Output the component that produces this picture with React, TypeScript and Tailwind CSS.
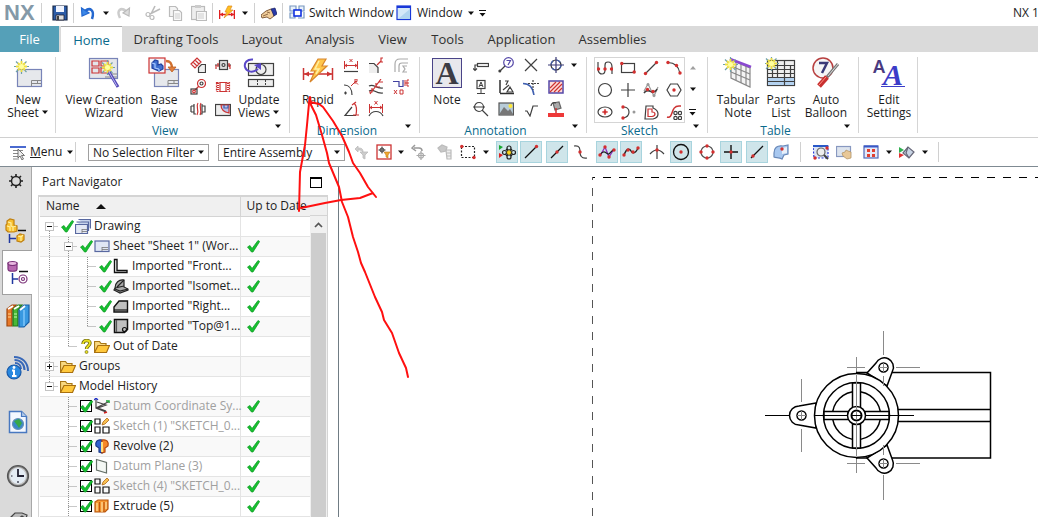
import type { ReactNode } from "react";

const D = "#404040";
const R = "#cc3333";

type SvgProps = { w?: number; h?: number; children: ReactNode };

function Ico({ w = 16, h = 16, children }: SvgProps) {
  return (
    <svg width={w} height={h} viewBox={`0 0 ${w} ${h}`} fill="none" stroke={D} strokeWidth="1.2" className="block shrink-0" aria-hidden="true">
      {children}
    </svg>
  );
}

const Arrow = ({ light = false }: { light?: boolean }) => (
  <svg width="8" height="5" viewBox="0 0 8 5" className="block shrink-0" aria-hidden="true">
    <path d="M1 .5h6L4 4z" fill={light ? "#a0a0a0" : "#111"} />
  </svg>
);

const OverflowArrow = () => (
  <svg width="8" height="7" viewBox="0 0 8 7" className="block shrink-0" aria-hidden="true">
    <path d="M0 0h7v1H0zM.5 3h6L3.5 6.500z" fill="#111" />
  </svg>
);

function Dots({ at }: { at: [number, number][] }) {
  return (
    <g fill="#d32f2f" stroke="none">
      {at.map(([x, y]) => (
        <circle key={`${x}-${y}`} cx={x} cy={y} r="1.700" />
      ))}
    </g>
  );
}

function Star() {
  return (
    <g>
      <path d="M7.500 0v15M0 7.500h15M2 2.500l10.500 10.500M12.500 2.500L2 13" stroke="#6fa0a8" strokeWidth="1.200" />
      <path d="M7.500 2v11M2 7.500h11M4 4l7 7M11 4l-7 7" stroke="#f0e040" strokeWidth="1.800" />
      <circle cx="7.500" cy="7.500" r="2.500" fill="#ffffa0" stroke="none" />
    </g>
  );
}

const big = {
  newSheet: (
    <Ico w={32} h={32}>
      <rect x="5.500" y="12.500" width="24" height="17" fill="#e6e8ec" stroke="#7884b8" />
      <path d="M19.500 23.500h9.500M19.500 26.500h9.500M19.500 23.500v6M25.500 23.500v3" stroke="#888" strokeWidth="1" />
      <g transform="translate(2 2)"><Star /></g>
    </Ico>
  ),
  wizard: (
    <Ico w={32} h={32}>
      <rect x="1.500" y="1.500" width="28" height="20" fill="#e4e6ea" stroke="#7884b8" />
      <path d="M4 4h7v5H4zM13 4h7v5h-7zM4 11h7v5H4zM13 11h7v5h-7z" stroke={R} />
      <path d="M19 17h10M17 20h12" stroke="#888" />
      <g transform="translate(12 3)"><Star /></g>
      <path d="M21 15l9 15" stroke="#5548b8" strokeWidth="3" />
      <path d="M21 15l8 14" stroke="#b8b8f0" strokeWidth="1" />
    </Ico>
  ),
  baseView: (
    <Ico w={32} h={32}>
      <rect x="6.500" y="12.500" width="24" height="17" fill="#e6e8ec" stroke="#7884b8" />
      <path d="M20 23.500h10M20 26.500h10M20 23.500v6M26 23.500v3" stroke="#888" strokeWidth="1" />
      <rect x="1" y="1" width="16" height="15" fill="#f4f4f8" stroke={R} />
      <path d="M4 6l3-3 3 1v4l3-1 2 2v3l-4 2-7-3z" fill="#4070d0" stroke="#2040a0" />
      <path d="M4 6l3 1v4l4 1M11 12v2" stroke="#a8c8ff" />
      <path d="M18 4c5 0 6 3 6 8" stroke="#d07030" strokeWidth="2.500" />
      <path d="M20 10h8l-4 5z" fill="#e08040" stroke="#c06020" strokeWidth=".8" />
    </Ico>
  ),
  update: (
    <Ico w={32} h={32}>
      <rect x="5.500" y="6.500" width="25" height="12" fill="#eee" stroke={D} />
      <circle cx="18" cy="12.500" r="5" />
      <rect x="5.500" y="22.500" width="25" height="7" fill="#eee" stroke={D} />
      <path d="M14.500 23v6M22.500 23v6" strokeDasharray="2 1" strokeWidth="1" />
      <path d="M10 2.500C4 2 1 6 2 10s7 7 13 2" stroke="#5a48c8" strokeWidth="2" />
      <path d="M11 8l7-2v7z" fill="#5a48c8" stroke="none" />
    </Ico>
  ),
  rapid: (
    <Ico w={32} h={32}>
      <path d="M1.500 11v12M30.500 11v12M2 17h28" stroke={R} strokeWidth="1.500" />
      <path d="M2 17l5-2.500v5zM30 17l-5-2.500v5z" fill={R} stroke="none" />
      <path d="M16 2h8l-4 7h5L8 25l5-11H9z" fill="#ffc64a" stroke="#d8862c" />
      <path d="M17 4l-4 8h4l-3 5" stroke="#fff0a0" strokeWidth="1.500" />
    </Ico>
  ),
  note: (
    <span className="mt-px flex size-[30px] items-center justify-center border border-[#4a4488] bg-[#e8e8ec] font-['Liberation_Serif',serif] text-[32px] leading-[28px] font-bold text-[#3c3c44]">A</span>
  ),
  tabular: (
    <Ico w={32} h={32}>
      <path d="M9 3l19 8v19L9 21z" fill="#f4f4f4" stroke="#888" />
      <path d="M9 9l19 8M9 15l19 8M14 5v18M19 7v19M24 9v19" stroke="#888" />
      <path d="M8 2l21 8" stroke="#8a48d0" strokeWidth="2.500" />
      <g transform="translate(1 0)"><Star /></g>
    </Ico>
  ),
  parts: (
    <Ico w={32} h={32}>
      <rect x="2.500" y="3.500" width="27" height="25" fill="#f0f0f0" stroke={D} />
      <rect x="3" y="20" width="26" height="8" fill="#b4d2f0" stroke="none" />
      <path d="M2 8.500h27M2 12.500h27M2 16.500h27M2 20.500h27M2 24.500h27M12.500 4v16M19.500 4v24M25.500 8v12M7.500 12v8" />
      <g transform="translate(-1 -1)"><Star /></g>
    </Ico>
  ),
  balloon: (
    <Ico w={32} h={32}>
      <circle cx="13" cy="11" r="10" fill="#f6f6f6" stroke="#b84040" strokeWidth="1.500" />
      <path d="M9 6h8l-5 10" stroke="#3a3a78" strokeWidth="2.500" />
      <path d="M28 7L17 20" stroke="#777" strokeWidth="3" />
      <path d="M28 7L18 19" stroke="#ddd" strokeWidth="1" />
      <path d="M17 20l-8 9" stroke="#c83030" strokeWidth="5" />
      <path d="M16 20l-7 8" stroke="#ff9080" strokeWidth="1" />
    </Ico>
  ),
  edit: (
    <span className="flex h-8 items-start justify-center" aria-hidden="true">
      <span className="font-['Noto_Sans',sans-serif] text-[18px] leading-[18px] font-semibold text-[#4a3a80]">A</span>
      <span className="-ml-1 mt-[7px] flex h-[23px] items-start border-b border-[#3c3cc8] px-0.5 font-['Liberation_Serif',serif] text-[30px] leading-[21px] font-bold italic text-[#3c3cc8]">A</span>
    </span>
  ),
};

const viewIcons: [string, ReactNode][] = [
  ["Projected View", <Ico><path d="M1 7l6-6 4 4-6 6zM3 5l4 4M5 3l4 4" stroke={R} /><path d="M8.500 15.500v-5l3-3h4v8z" fill="#eee" /></Ico>],
  ["Section View", <Ico><rect x="4.500" y="3.500" width="8" height="9" fill="#ddd" /><circle cx="8.500" cy="8" r="1.500" /><path d="M0 8h4M12 8h4" /><path d="M1 8v4M15 8v4M3 6v4M14 6v4" stroke={R} /></Ico>],
  ["Detail View", <Ico><circle cx="11.500" cy="4.500" r="4" fill="#fff" stroke={R} /><circle cx="11.500" cy="4.500" r="1.500" /><path d="M9 7l-4 4" stroke={R} /><rect x="1" y="10" width="6" height="5" /><circle cx="4" cy="12.500" r="1.300" stroke={R} /></Ico>],
  ["Half Section", <Ico><rect x="1.500" y="3.500" width="13" height="9" stroke={R} strokeDasharray="2 1" /><path d="M5 3.500h6v9H5z" fill="#fff" stroke={R} /><path d="M3 4v8M13 4v8" stroke={R} strokeDasharray="1 1" strokeWidth="2" /></Ico>],
  ["Break View", <Ico><path d="M1 5v6M1 5h3v6H1M4 3v10h2M15 5v6h-3V5zM12 3v10h-2" /><path d="M8 2c-3 4 2 7-1 12M11 2c-3 4 2 7-1 12" stroke={R} /></Ico>],
  ["Break-out Section", <Ico><rect x=".5" y="3.500" width="15" height="11" fill="#eee" /><path d="M6 4c0 5 3 7 8 8V4z" fill="#b8c0e8" stroke={R} /><path d="M9 4v3h4V4" stroke="#4060b0" /></Ico>],
];

const dimIcons: [string, ReactNode][] = [
  ["Linear", <Ico><path d="M1.500 4v8M14.500 4v8M2 8.500h12M6.500 2l3 3M9.500 2l-3 3M4 7L2 8.500 4 10M12 7l2 1.500L12 10" stroke={R} strokeWidth="1" /><path d="M1 14.500h14" /></Ico>],
  ["Chamfer", <Ico><path d="M1 7h5l4 4v5H1z" fill="#eee" stroke="none" /><path d="M1 6.500h5l4 4V16" /><path d="M9 8l4-4M15 1h-2v4h2" stroke={R} /></Ico>],
  ["Thickness Arc", <Ico><path d="M2 15V7q0-5 5-5h8M6 15V9q0-3 3-3h6" stroke="#aaa" /><path d="M14 9h-4l2 3-2 3h4" stroke="#aaa" /></Ico>],
  ["Radial", <Ico><path d="M1 6c5 0 8 4 8 10M1 14h3M2.500 12.500v3" /><path d="M8 7l4-4M12 5V0h2v2.500h-2l3 3" stroke={R} strokeWidth="1" /></Ico>],
  ["Thickness", <Ico><path d="M1 7c5-3 6 3 14 2M1 12c5-3 6 3 14 2" /><path d="M13 0L2 15M11 3h4M4 9v4H1M8 4v4h4" stroke={R} /></Ico>],
  ["Ordinate", <Ico><path d="M0 2.500h6v5h4V1" stroke="#4040a0" /><path d="M12 1v6M14 1v6h2M14 1h2M1 11l3 4M4 11l-3 4M7 11v4h3v-4zM12 4h4" stroke={R} strokeWidth="1" /></Ico>],
  ["Angular", <Ico><path d="M13 14.500H2L9 6" /><path d="M11 2c3 3 3 7 2 12M9 4l4-3M10 14h6" stroke={R} /></Ico>],
  ["Arc Length", <Ico><path d="M1 15c3-6 11-6 14 0" /><path d="M1.500 3v9M14.500 3v9M2 6.500h12M6.500 0l3 3.500M9.500 0l-3 3.500M4 5L2 6.500 4 8M12 5l2 1.500L12 8" stroke={R} strokeWidth="1" /></Ico>],
];

const annoIcons: [string, ReactNode][] = [
  ["Feature Control Frame", <Ico><rect x="4.500" y="6.500" width="11" height="3" fill="#fff" /><path d="M2 13V8h3M0 11.500l2 2 2-2" /></Ico>],
  ["Balloon", <Ico><circle cx="10.500" cy="5.500" r="4.800" stroke="#5548a8" /><path d="M8.500 3.500h4L10 8" stroke="#5548a8" /><path d="M7 9l-5 5" /><circle cx="1.800" cy="14" r="1.500" fill={D} stroke="none" /></Ico>],
  ["Target Point", <Ico><path d="M2 2l12 12M14 2L2 14" /></Ico>],
  ["Center Mark", <Ico><circle cx="8" cy="8" r="5" stroke="#303030" /><circle cx="8" cy="8" r="5" stroke="#4060b0" strokeDasharray="4 4" /><path d="M8 0v16M0 8h16" stroke="#3a3a78" /></Ico>],
  ["Datum Feature", <Ico><rect x="4" y="1.500" width="8" height="8" fill="#fff" /><path d="M8 10v4M4 14.500h8M6 8l2-5 2 5M7 6.500h2" strokeWidth="1" /></Ico>],
  ["Datum Target", <Ico><path d="M2 1v13M2 14.500h14" stroke="#303030" strokeWidth="1.500" /><path d="M5 11l6-5M7 2h3l-2 4M12 8l3 5H9z" /></Ico>],
  ["Intersection", <Ico><path d="M0 4.500c6 0 10 4 11 12" stroke="#4060b0" strokeWidth="1.500" /><path d="M10 1v10M5 4.500h11" strokeDasharray="2 1" /></Ico>],
  ["Crosshatch", <Ico><rect x="1" y="2" width="14" height="12" fill="#ffdcd8" stroke="#5548a8" strokeWidth="1.500" /><path d="M2 9l6-6M2 13L12 3M6 13l8-8M10 13l4-4" stroke={R} /></Ico>],
  ["Identification Symbol", <Ico><circle cx="6" cy="6" r="4.500" /><path d="M0 6h12M9 9l6 6" /></Ico>],
  ["Image", <Ico><rect x="1" y="2" width="14.500" height="12" fill="#b8ccd8" stroke="#555" /><path d="M2 12l4-6 4 4 2-2 3 5v1H2z" fill="#777" stroke="none" /><circle cx="12.500" cy="5" r="2" fill="#ffe838" stroke="none" /></Ico>],
  ["Surface Finish", <Ico><path d="M2 10h2l3 5L10 5h5" /></Ico>],
  ["Area Fill", <Ico><path d="M5 2l6-1 2 6-6 2z" fill="#aaa" stroke="#666" /><path d="M3 5c0-3 3-4 5-3" /><path d="M8 7v6" stroke={R} strokeWidth="1.500" /><path d="M0 12h16v4H0z" fill="#ee3838" stroke="none" /></Ico>],
];

const sketchIcons: [string, ReactNode][] = [
  ["Profile", <Ico><path d="M1 2v8q1 4 4 4t3-4V5q0-3 3-3 4 0 4 5v7" /><Dots at={[[1.500, 9], [8, 9], [14.500, 9]]} /></Ico>],
  ["Rectangle", <Ico><rect x="1.500" y="3.500" width="13" height="9" /><Dots at={[[1.800, 3.500], [14.200, 12]]} /></Ico>],
  ["Line", <Ico><path d="M2 14L14 2" /><Dots at={[[2.500, 13.500], [13.500, 2.500]]} /></Ico>],
  ["Arc", <Ico><path d="M2 2.500q10 0 12 11" /><Dots at={[[2, 2.500], [10.500, 5.500], [14, 13]]} /></Ico>],
  ["Circle", <Ico><circle cx="8" cy="8" r="6.500" /></Ico>],
  ["Point", <Ico><path d="M8 1v14M1 8h14" /></Ico>],
  ["Studio Spline", <Ico><path d="M1 9l4-7 6 12 4-9" stroke="#999" /><path d="M1 11c3-5 7-1 8-1s4 0 5-3" strokeWidth="1.500" /><circle cx="5" cy="2.500" r="1.500" fill="#999" stroke="none" /><circle cx="11" cy="13.500" r="1.500" fill="#999" stroke="none" /><Dots at={[[4.500, 7.500], [10, 9.500]]} /></Ico>],
  ["Polygon", <Ico><path d="M4.500 2h7L15 8l-3.500 6h-7L1 8z" /><Dots at={[[8, 8]]} /></Ico>],
  ["Ellipse", <Ico><ellipse cx="8" cy="8" rx="7" ry="5" /><path d="M5 8h6M8 5v6" stroke={R} /><Dots at={[[8, 8]]} /></Ico>],
  ["Conic", <Ico><path d="M3 3q6 0 6 5t-6 6" /><Dots at={[[3, 3], [3, 14]]} /><circle cx="14" cy="8" r="1.500" fill="#999" stroke="none" /></Ico>],
  ["Offset Curve", <Ico><path d="M3 2h7v2q5 2 5 6t-5 5H2z" /><path d="M5 5h4v3q3 0 3 2t-3 2.500H5z" stroke={R} /></Ico>],
  ["Pattern Curve", <Ico><path d="M1 13c7 2 3-11 12-11h2" stroke={R} strokeWidth="1.500" /><circle cx="9.500" cy="9" r="1.700" /><circle cx="14" cy="9" r="1.700" /><circle cx="9.500" cy="14" r="1.700" /><circle cx="14" cy="14" r="1.700" /></Ico>],
];

function BigButton({ icon, lines, width, drop = false }: { icon: ReactNode; lines: string[]; width: string; drop?: boolean }) {
  return (
    <button type="button" className={`${width} flex shrink-0 flex-col items-center whitespace-nowrap`}>
      <span className="flex h-8 items-start justify-center">{icon}</span>
      <span className="mt-1 flex flex-col items-center text-xs leading-[13px]">
        {lines.map((l, i) => (
          <span key={l} className="flex items-center gap-0.5">
            {l}
            {drop && i === lines.length - 1 && <Arrow />}
          </span>
        ))}
      </span>
    </button>
  );
}

function IconGrid({ icons, cols }: { icons: [string, ReactNode][]; cols: string }) {
  return (
    <div className={`grid ${cols} content-start gap-y-1.5`}>
      {icons.map(([name, icon]) => (
        <button key={name} type="button" title={name} aria-label={name}>{icon}</button>
      ))}
    </div>
  );
}

function Group({ width, label, children }: { width: string; label?: string; children: ReactNode }) {
  return (
    <section className={`${width} flex h-20 shrink-0`}>
      <div className="flex min-w-0 flex-1 flex-col">
        <div className="flex items-start">{children}</div>
        {label && (
          <div className="mt-auto flex text-xs leading-[13px] text-[#0a6a8c]">
            <span className="flex-1 text-center">{label}</span>
            <button type="button" aria-label={`${label} options`} className="flex w-[15px] items-start"><Arrow /></button>
          </div>
        )}
      </div>
      <div className="h-[76px] w-px bg-[#d5d5d5]" />
    </section>
  );
}

const Sep = () => <div className="h-5 w-px shrink-0 bg-[#d0d0d0]" />;

function QuickBar() {
  return (
    <header className="flex h-[26px] shrink-0 items-center text-xs whitespace-nowrap">
      <div className="w-[41px] shrink-0 pl-1 font-['Liberation_Sans',sans-serif] text-[22px] leading-[26px] font-bold text-[#8499a8]">NX</div>
      <Sep />
      <button type="button" aria-label="Save" className="ml-2.5">
        <Ico><path d="M1 1h14v14H1z" fill="#2c5ca8" stroke="#182848" /><path d="M4 1h8v6H4z" fill="#f0f4ff" stroke="none" /><path d="M4 10h8v5H4z" fill="#e0e0e0" stroke="#223" strokeWidth=".8" /><path d="M6 11v4" strokeWidth="2" /></Ico>
      </button>
      <div className="ml-[5px]"><Sep /></div>
      <button type="button" aria-label="Undo" className="ml-1.5">
        <Ico><path d="M5 6c5-4 10-1 7 8" stroke="#2468d0" strokeWidth="2.500" /><path d="M1.500 3l.5 8 7-3z" fill="#3c88e8" stroke="#2468d0" /></Ico>
      </button>
      <button type="button" aria-label="Undo list" className="ml-1.5"><Arrow /></button>
      <button type="button" aria-label="Redo" className="ml-1.5">
        <Ico><path d="M10 6C5 2 0 5 4 13" stroke="#ccc" strokeWidth="2.500" /><path d="M13.500 3l-.5 8-6-3z" fill="#ddd" stroke="#bbb" /></Ico>
      </button>
      <button type="button" aria-label="Cut" className="ml-[13px]">
        <Ico><path d="M10 1L6 9M15 4L5 9" stroke="#bbb" strokeWidth="1.600" /><circle cx="3" cy="9.500" r="2" stroke="#bbb" /><circle cx="7" cy="12.500" r="2" stroke="#bbb" /></Ico>
      </button>
      <button type="button" aria-label="Copy" className="ml-[7px]">
        <Ico><path d="M1.500 1.500h6l2 2v8h-8z" fill="#f4f4f4" stroke="#bbb" /><path d="M5.500 5.500h6l2 2v8h-8z" fill="#fafafa" stroke="#bbb" /><path d="M7 9h5M7 11h5M7 13h5" stroke="#ccc" /></Ico>
      </button>
      <button type="button" aria-label="Paste" className="ml-[7px]">
        <Ico><rect x=".5" y="1.500" width="13" height="13" fill="#eee" stroke="#bbb" /><rect x="4" y="0" width="6" height="3" fill="#ccc" stroke="none" /><path d="M5.500 6.500h10v9h-10z" fill="#fafafa" stroke="#bbb" /><path d="M7 9h6M7 11h6M7 13h6" stroke="#ccc" /></Ico>
      </button>
      <div className="ml-[5px]"><Sep /></div>
      <button type="button" aria-label="Rapid Dimension" className="ml-1.5">
        <Ico><path d="M.6 5v9M15.400 5v9M1 9.500h14" stroke="#e02020" strokeWidth="1.400" /><path d="M1 9.500l3-2v4zM15 9.500l-3-2v4z" fill="#e02020" stroke="none" /><path d="M9 1h4l-2 4h3L5 13l3-6H6z" fill="#ffc020" stroke="#e08a20" strokeWidth=".7" /></Ico>
      </button>
      <button type="button" aria-label="Dimension list" className="ml-1.5"><Arrow /></button>
      <div className="ml-[5px]"><Sep /></div>
      <button type="button" aria-label="Touch mode" className="ml-1.5">
        <Ico><path d="M0 10l5-4 5-2 3 2v5l-4 3-3-2-5 1z" fill="#f0cc98" stroke="#775030" strokeWidth=".9" /><path d="M2 11l5-2M6 7l3 1" stroke="#775030" strokeWidth=".8" /><path d="M10 4l4-1 2 6-3 2z" fill="#2838a8" stroke="#182060" strokeWidth=".7" /></Ico>
      </button>
      <div className="ml-[5px]"><Sep /></div>
      <button type="button" className="ml-1.5 flex w-[107px] items-center gap-1">
        <Ico><path d="M1 1h6v5H1zM10 1h5v5h-5zM1 8h5v5H1z" stroke="#7898c0" fill="#e8f0fa" /><rect x="5" y="5" width="7" height="6" fill="#fff" stroke="#1030e0" strokeWidth="1.600" /><path d="M9 13h6V7" stroke="#7898c0" /></Ico>
        Switch Window
      </button>
      <button type="button" className="flex items-center gap-[5px]">
        <Ico><rect x="1" y="1" width="13.500" height="13.500" fill="#d4e8f8" stroke="#1838d8" strokeWidth="1.200" /><path d="M1 2h13.500" stroke="#1838d8" strokeWidth="2" /><path d="M2 14L14 4v10z" fill="#b0d4f0" stroke="none" /></Ico>
        Window
        <Arrow />
      </button>
      <button type="button" aria-label="Customize" className="ml-1"><OverflowArrow /></button>
      <div className="ml-auto w-[25px] shrink-0">NX 1</div>
    </header>
  );
}

const tabs: [string, string][] = [
  ["Drafting Tools", "w-[108px]"],
  ["Layout", "w-16"],
  ["Analysis", "w-[72px]"],
  ["View", "w-[53px]"],
  ["Tools", "w-[57px]"],
  ["Application", "w-[91px]"],
  ["Assemblies", "w-[91px]"],
];

function TabBar() {
  return (
    <nav className="flex h-[26px] shrink-0 bg-[#dadada] text-[13px] leading-[26px] whitespace-nowrap text-[#303030]">
      <button type="button" className="w-[59px] bg-[#55a0b8] pb-0.5 text-white">File</button>
      <button type="button" className="ml-0.5 w-[61px] border-t border-[#a8a8a8] bg-white text-[#0a6a8c]">Home</button>
      {tabs.map(([t, w]) => (
        <button key={t} type="button" className={w}>{t}</button>
      ))}
    </nav>
  );
}

function Ribbon() {
  return (
    <div className="flex h-[86px] shrink-0 overflow-hidden border-b border-[#d0d0d0] pt-[5px]">
      <Group width="w-14"><BigButton icon={big.newSheet} lines={["New", "Sheet"]} width="w-14" drop /></Group>
      <Group width="w-[234px]" label="View">
        <div className="ml-2"><BigButton icon={big.wizard} lines={["View Creation", "Wizard"]} width="w-20" /></div>
        <BigButton icon={big.baseView} lines={["Base", "View"]} width="w-10" />
        <div className="mx-1.5"><IconGrid icons={viewIcons} cols="grid-cols-2 gap-x-[9px]" /></div>
        <BigButton icon={big.update} lines={["Update", "Views"]} width="w-11" drop />
      </Group>
      <Group width="w-[130px]" label="Dimension">
        <div className="mr-[3px] ml-1.5"><BigButton icon={big.rapid} lines={["Rapid"]} width="w-11" /></div>
        <IconGrid icons={dimIcons} cols="grid-cols-3 gap-x-[9px]" />
      </Group>
      <Group width="w-[167px]" label="Annotation">
        <div className="mr-1.5 ml-[7px]"><BigButton icon={big.note} lines={["Note"]} width="w-10" /></div>
        <IconGrid icons={annoIcons} cols="grid-cols-4 gap-x-[9px]" />
        <button type="button" aria-label="More symbols" className="mt-1.5 ml-1.5"><Arrow /></button>
      </Group>
      <Group width="w-[121px]" label="Sketch">
        <div className="ml-[7px] h-[66px] border border-[#d5d5d5] p-0.5"><IconGrid icons={sketchIcons} cols="grid-cols-4 gap-x-[7px]" /></div>
        <div className="ml-1 flex flex-col gap-[17px] pt-2">
          <button type="button" aria-label="Scroll up" className="rotate-180"><Arrow light /></button>
          <button type="button" aria-label="Scroll down"><Arrow /></button>
          <button type="button" aria-label="Expand gallery"><OverflowArrow /></button>
        </div>
      </Group>
      <Group width="w-[151px]" label="Table">
        <div className="ml-2"><BigButton icon={big.tabular} lines={["Tabular", "Note"]} width="w-11" /></div>
        <BigButton icon={big.parts} lines={["Parts", "List"]} width="w-[42px]" />
        <BigButton icon={big.balloon} lines={["Auto", "Balloon"]} width="w-12" />
      </Group>
      <Group width="w-[59px]">
        <div className="ml-1.5"><BigButton icon={big.edit} lines={["Edit", "Settings"]} width="w-12" /></div>
      </Group>
    </div>
  );
}

function FilterSelect({ label, value, width }: { label: string; value: string; width: string }) {
  return (
    <div className={`${width} relative shrink-0`}>
      <select aria-label={label} className="block h-[17px] w-full appearance-none border border-[#a0a0a0] bg-white pl-1 text-xs leading-[15px] outline-none">
        <option>{value}</option>
      </select>
      <span className="pointer-events-none absolute top-[6px] right-1"><Arrow /></span>
    </div>
  );
}

const snapPairs: [string, boolean, ReactNode][][] = [
  [
    ["Enable Snap Point", true, <Ico w={18} h={18}><path d="M1 2l4 2-4 3z" fill="#18a830" stroke="none" /><path d="M1 10l4 2-4 3z" fill="#e02020" stroke="none" /><circle cx="11" cy="5" r="2" stroke="#222" /><circle cx="11" cy="14" r="2" stroke="#222" /><circle cx="6.500" cy="9.500" r="2" stroke="#222" /><circle cx="15.500" cy="9.500" r="2" stroke="#222" /><path d="M8 6l6 7M14 6l-6 7" stroke="#222" /><circle cx="11" cy="9.500" r="2" fill="#ffd820" stroke="#b09000" strokeWidth=".6" /></Ico>],
    ["End Point", true, <Ico><path d="M2 14L13 3" stroke="#111" /><Dots at={[[13.500, 2.500]]} /></Ico>],
  ],
  [
    ["Mid Point", true, <Ico><path d="M2 14L14 2" stroke="#111" /><Dots at={[[8, 8]]} /></Ico>],
    ["Control Point", false, <Ico><path d="M1 2c6-1 6 3 6 6s1 7 7 6" /><Dots at={[[7, 8]]} /></Ico>],
  ],
  [
    ["Pole", true, <Ico w={18} h={18}><path d="M2 13L7 4l4 10 5-8" stroke="#9030c0" strokeWidth="1.300" /><path d="M2 12c4-7 7 0 9-1l4-4" stroke="#222" /><Dots at={[[2, 12], [7, 4], [11, 14], [16, 7]]} /></Ico>],
    ["Defining Point", true, <Ico w={18} h={18}><path d="M2 12C5 4 8 6 9 8s4 4 7-3" stroke="#222" strokeWidth="1.400" /><Dots at={[[2, 12], [6, 7], [11, 9], [16, 5]]} /></Ico>],
  ],
  [
    ["Intersection Point", false, <Ico><path d="M1 10q7-8 14 0M8 1v14" /><Dots at={[[8, 6]]} /></Ico>],
    ["Arc Center", true, <Ico w={18} h={18}><circle cx="9" cy="9" r="7.500" stroke="#111" strokeWidth="1.300" /><Dots at={[[9, 9]]} /></Ico>],
  ],
  [
    ["Quadrant Point", false, <Ico><circle cx="8" cy="8" r="6" stroke="#555" /><Dots at={[[8, 2], [8, 14], [2, 8], [14, 8]]} /></Ico>],
    ["Existing Point", true, <Ico><path d="M8 1v14M1 8h14" stroke="#111" strokeWidth="1.400" /><Dots at={[[8, 8]]} /></Ico>],
  ],
  [
    ["Point on Curve", true, <Ico><path d="M2 14L14 2" stroke="#111" /><Dots at={[[4, 12]]} /></Ico>],
    ["Point on Face", false, <Ico><path d="M1 9c0-5 3-8 9-7l5-1v9l-4 1-2 4c-3-2-6-1-8-2z" fill="#a8c8f0" stroke="#6888b8" /><path d="M9 4l5-1v6l-5 1z" fill="#e8f0fa" stroke="none" /><Dots at={[[9, 5]]} /></Ico>],
  ],
];

function SelectionBar() {
  return (
    <div className="flex h-[29px] shrink-0 items-center border-b border-[#7f8a92] text-xs whitespace-nowrap">
      <button type="button" className="ml-2.5 flex w-[65px] items-center gap-1">
        <Ico><path d="M0 2h16v2H0z" fill="#4a6ad0" stroke="none" /><path d="M3 6.500h10M3 9.500h8M3 12.500h8M3 15h6" stroke="#888" /><path d="M8 5v9l2-2 2 4 1.500-1-2-3.500h3z" fill="#eee" stroke="#555" strokeWidth=".8" /></Ico>
        <span className="w-8 text-left"><u>M</u>enu</span>
        <Arrow />
      </button>
      <Sep />
      <div className="ml-3"><FilterSelect label="Selection filter" value="No Selection Filter" width="w-[121px]" /></div>
      <div className="ml-[9px]"><FilterSelect label="Selection scope" value="Entire Assembly" width="w-[127px]" /></div>
      <button type="button" aria-label="Reset filters" className="ml-2">
        <Ico><path d="M2 5l3-3v2c4 0 5 1 5 4-2-2-3-2-5-2v2z" fill="#ccc" stroke="#bbb" strokeWidth=".8" /><path d="M7 8h8l-3 3v4l-2-1v-3z" fill="#ccc" stroke="#bbb" strokeWidth=".8" /></Ico>
      </button>
      <button type="button" aria-label="Detail filtering" className="ml-[7px]">
        <Ico><rect x="1" y="1" width="14" height="14" fill="#fff" stroke={R} strokeWidth="1.300" /><path d="M6 2.500v7M2.500 6h7" strokeWidth="1" /><circle cx="6" cy="6" r="2" strokeWidth="1" /><path d="M8 8h6l-2 3v3l-2-1v-2z" fill="#f0a830" stroke="#c07818" strokeWidth=".6" /></Ico>
      </button>
      <button type="button" aria-label="Filter list" className="ml-[5px]"><Arrow /></button>
      <button type="button" aria-label="Reselect" className="ml-1.5">
        <Ico><path d="M3 4h5q3 0 3 3M4 1L1 4l4 3" stroke="#999" strokeWidth="1.500" /><path d="M10 7v9M5.500 11.500h9" stroke="#aaa" /><circle cx="10" cy="11.500" r="2.500" stroke="#aaa" /></Ico>
      </button>
      <button type="button" aria-label="Highlight hidden" className="ml-2.5">
        <Ico><path d="M1 4l4-3 5 2-1 4-5 1z" fill="#c8c8c8" stroke="#bbb" /><path d="M9 6h5v9h-4z" fill="#eee" stroke="#bbb" /><path d="M10 9h4M10 12h4" stroke="#bbb" /></Ico>
      </button>
      <button type="button" aria-label="Rectangle select" className="ml-[7px]">
        <Ico><rect x="1.500" y="2.500" width="13" height="11" strokeDasharray="2 1.500" stroke="#222" /><Dots at={[[1.800, 2.500], [14, 13.500]]} /></Ico>
      </button>
      <button type="button" aria-label="Selection shapes" className="ml-1.5"><Arrow /></button>
      <div className="ml-1.5 flex gap-1">
        {snapPairs.map((pair) => (
          <div key={pair[0][0]} className="flex gap-0.5">
            {pair.map(([name, on, icon]) => (
              <button key={name} type="button" aria-label={name} aria-pressed={on} className={on ? "flex size-[22px] items-center justify-center border border-[#a8d4de] bg-[#cfe5ea]" : "flex size-[22px] items-center justify-center"}>{icon}</button>
            ))}
          </div>
        ))}
      </div>
      <div className="ml-2"><Sep /></div>
      <button type="button" aria-label="Zoom window" className="ml-3">
        <Ico><path d="M0 2h15v12H1z" stroke="#2838d8" strokeDasharray="2 1.500" fill="#dce4f4" /><path d="M0 2h15" stroke="#2858c8" strokeWidth="2" /><circle cx="8" cy="8" r="4" fill="#eee" stroke="#666" /><path d="M11 11l4 4" strokeWidth="2" /><Dots at={[[14, 4], [2, 14]]} /></Ico>
      </button>
      <button type="button" aria-label="Pan" className="ml-[7px]">
        <Ico><rect x=".5" y="2.500" width="14" height="10" fill="#dde4ee" stroke="#8898c0" /><path d="M6 9l3-1 1-2 2 1 3 1v6l-4 1-4-3z" fill="#e8c898" stroke="#b09060" strokeWidth=".7" /></Ico>
      </button>
      <button type="button" aria-label="Fit" className="ml-[11px]">
        <Ico><rect x="1" y="2" width="14" height="12" fill="#e4e8f8" stroke="#5068b8" /><path d="M1 2.500h14" stroke="#3858c8" strokeWidth="2" /><path d="M4 5h3v3H4zM9 5h3v3H9zM4 10h3v3H4zM9 10h3v3H9z" fill="#e04030" stroke="none" /></Ico>
      </button>
      <button type="button" aria-label="View list" className="ml-1.5"><Arrow /></button>
      <button type="button" aria-label="Render style" className="ml-1.5">
        <Ico><path d="M0 3l5 3-5 3z" fill="#30b050" stroke="none" /><path d="M0 9l5 2-5 3z" fill="#e03030" stroke="none" /><path d="M4 9l5-6 6 5-5 6z" fill="#c8d4e4" stroke="#667" /><path d="M9 3l-2 6 3 5" stroke="#667" /></Ico>
      </button>
      <button type="button" aria-label="Style list" className="ml-1.5"><Arrow /></button>
      <div className="ml-[9px]"><Sep /></div>
    </div>
  );
}

function Rail() {
  const slot = "flex shrink-0 items-center justify-center";
  return (
    <nav className="flex w-8 shrink-0 flex-col overflow-hidden bg-[#dadada]" aria-label="Resource bar">
      <button type="button" aria-label="Settings" className={`${slot} h-7 border-r border-[#a8a8a8]`}>
        <Ico w={14} h={14}><circle cx="7" cy="7" r="4.500" stroke="#222" strokeWidth="1.500" /><path d="M7 0v2.500M7 11.500V14M0 7h2.500M11.500 7H14M2 2l2 2M12 2l-2 2M2 12l2-2M12 12l-2-2" stroke="#222" strokeWidth="1.600" /></Ico>
      </button>
      <button type="button" aria-label="Assembly Navigator" className={`${slot} h-[55px] border-r border-[#a8a8a8] pt-4`}>
        <Ico w={24} h={26}>
          <path d="M3 3l3-2 4 1v5l3 1v5l-3 1H4l-2-2V7l1-1z" fill="#f8c030" stroke="#c08010" />
          <path d="M4 4l3 1v3l2 1v4M9 9l3-1M3 8l3 1v4" stroke="#fff0a0" /><path d="M14 12.500h8" stroke="#111" strokeWidth="1.500" />
          <path d="M5.500 16v9M6 20.500h6" stroke="#2038a0" strokeWidth="1.500" />
          <path d="M13 18l3-2 4 1v5l-3 2-4-1z" fill="#f8c030" stroke="#c08010" /><path d="M14 18l3 1v4M17 19l2-2" stroke="#fff0a0" />
        </Ico>
      </button>
      <button type="button" aria-label="Part Navigator" className={`${slot} ml-0.5 h-[45px] border-y border-l border-[#a0a0a0] bg-white`}>
        <Ico w={24} h={26}>
          <path d="M2 3v6c0 3 9 3 9 0V3z" fill="#b868b0" stroke="#7a3078" /><ellipse cx="6.500" cy="3.500" rx="4.500" ry="2" fill="#e8b8e0" stroke="#7a3078" />
          <path d="M13 11.500h9" stroke="#111" strokeWidth="1.500" /><path d="M6.500 13v11M7 19h5" stroke="#2038a0" strokeWidth="1.500" />
          <circle cx="17" cy="19" r="4" stroke="#7a3078" /><circle cx="17" cy="19" r="1.500" stroke="#7a3078" />
        </Ico>
      </button>
      <div className="flex flex-1 flex-col border-r border-[#a8a8a8]">
        <button type="button" aria-label="Reuse Library" className={`${slot} mb-1 h-[42px] pl-1`}>
          <Ico w={24} h={24}>
            <path d="M1 5l5-4h4L6 6v16H1z" fill="#e87828" stroke="#a04810" /><path d="M7 5l5-4h4l-4 5v16H7z" fill="#48b838" stroke="#207818" />
            <path d="M13 6l5-5h5v17l-5 5h-5z" fill="#3898e0" stroke="#1860a8" /><path d="M2 5l5-3M8 5l5-3M14 6l5-4" stroke="#fff" strokeWidth="2" />
            <path d="M2 10h3M2 13h3" stroke="#ffd890" /><path d="M8 10h3M8 13h3" stroke="#c0ffb0" /><path d="M18 6v16" stroke="#90d0ff" />
          </Ico>
        </button>
        <button type="button" aria-label="HD3D Tools" className={`${slot} h-[54px] pl-1`}>
          <Ico w={24} h={26}>
            <path d="M8 2c8 0 14 5 14 14M8.500 5c6 0 10 4 10 10M9 8c4 0 6 3 6 6" stroke="#3868b8" strokeWidth="2" />
            <circle cx="8" cy="17" r="7" fill="#2888e0" stroke="#1858a8" /><path d="M8 15v6M6 15.500h2.500M6 21h4.500" stroke="#fff" strokeWidth="2" /><circle cx="8" cy="12.500" r="1.400" fill="#fff" stroke="none" />
          </Ico>
        </button>
        <button type="button" aria-label="Web Browser" className={`${slot} h-[54px] pl-1`}>
          <Ico w={20} h={24}>
            <path d="M1.500 1.500h12l5 5v16h-17z" fill="#f4f8ff" stroke="#4878c0" strokeWidth="1.500" /><path d="M13.500 1.500v5h5" fill="#b0c8e8" stroke="#4878c0" />
            <circle cx="10" cy="14" r="5.500" fill="#3888c8" stroke="#6890b8" /><path d="M6 11l5-2 3 4-3 5-2-3z" fill="#38a848" stroke="none" />
          </Ico>
        </button>
        <button type="button" aria-label="History" className={`${slot} h-[54px] pl-1`}>
          <Ico w={24} h={24}>
            <circle cx="12" cy="12" r="10.500" fill="#777" stroke="#555" /><circle cx="12" cy="12" r="8.500" fill="#e4ecf4" stroke="#c8c8c8" />
            <path d="M12 5v7h6" stroke="#223" strokeWidth="1.800" /><path d="M12 17v2M5 12h1.500" stroke="#223" />
          </Ico>
        </button>
        <button type="button" aria-label="Process Studio" className={`${slot} h-8 pl-2`}>
          <Ico w={20} h={20}><path d="M1 8l4-4h7l5 2-1 4-4-3-4 3z" fill="#bbb" stroke="#444" /><path d="M8 9L2 18M10 9l5 9" strokeWidth="2.500" /></Ico>
        </button>
      </div>
    </nav>
  );
}

const Check = () => (
  <svg width="13" height="13" viewBox="0 0 13 13" className="block shrink-0" aria-hidden="true">
    <path d="M.5 7l2.500-1.500L5 8.500 11 .5l1.700 1L6 12H4.500z" fill="#16c030" stroke="#0a9820" strokeWidth=".7" />
  </svg>
);

type Row = {
  text: string;
  level: number;
  box?: "+" | "-";
  v: ("full" | "top" | "bottom" | "")[];
  mark?: "check" | "question" | "box";
  icon: ReactNode;
  upToDate?: boolean;
  dim?: boolean;
};

const folder = (
  <Ico><path d="M.5 14V3.500h5l1.500 2h5V8" fill="#f8d880" stroke="#a87818" /><path d="M.5 14.500L4 7.500h11.500l-3 7z" fill="#ffc83c" stroke="#a87010" /></Ico>
);
const sketchIcon = (
  <Ico><path d="M1 1h5v5H1zM1 9h5v6H1zM9 9h6v6H9z" stroke="#111" /><path d="M8 7l1-3 4-4 2 2-4 4z" fill="#f8c050" stroke="#b06818" strokeWidth=".8" /></Ico>
);

const rows: Row[] = [
  { text: "Drawing", level: 0, box: "-", v: ["bottom"], mark: "check", icon: <Ico><path d="M3.500 1.500h12v9M1.500 4h12v9" fill="#c8d4ec" stroke="#5868a0" /><path d="M.5 6.500h12v9H.5z" fill="#e4e8f4" stroke="#5868a0" /><path d="M7 11.500h5M7 13.500h5M7 11v4" stroke="#777" strokeWidth=".8" /></Ico> },
  { text: "Sheet \"Sheet 1\" (Wor...", level: 1, box: "-", v: ["full", "full"], mark: "check", upToDate: true, icon: <Ico><rect x="1" y="3" width="14" height="10.500" fill="#e0e6f4" stroke="#5868a0" /><path d="M8 9.500h6M8 11.500h6M8 9v4" stroke="#777" strokeWidth=".8" /></Ico> },
  { text: "Imported \"Front...", level: 2, v: ["full", "full", "full"], mark: "check", upToDate: true, icon: <Ico><path d="M1.500 1.500h2.500v11h10v2H1.500z" fill="#fff" stroke="#111" strokeWidth="1.400" /></Ico> },
  { text: "Imported \"Isomet...", level: 2, v: ["full", "full", "full"], mark: "check", upToDate: true, icon: <Ico><path d="M2 10C2 5 6 1 11 2v7l4 2v1l-8 3-6-3z" fill="#a8a8a8" stroke="#222" /><path d="M2 10l9-2M2 11l5 2 8-2M4 9l7-7" stroke="#222" /></Ico> },
  { text: "Imported \"Right...", level: 2, v: ["full", "full", "full"], mark: "check", upToDate: true, icon: <Ico><path d="M1 14V9l5-6h8.500v11z" fill="#c0c0c0" stroke="#111" strokeWidth="1.400" /><path d="M1 12h13" stroke="#111" /></Ico> },
  { text: "Imported \"Top@1...", level: 2, v: ["full", "full", "top"], mark: "check", upToDate: true, icon: <Ico><path d="M1.500 1.500h13v10l-3 3h-10z" fill="#c0c0c0" stroke="#111" strokeWidth="1.500" /><path d="M3.500 2v12" stroke="#555" /><circle cx="11.500" cy="11.500" r="2" stroke="#111" /></Ico> },
  { text: "Out of Date", level: 1, v: ["full", "top"], mark: "question", icon: folder },
  { text: "Groups", level: 0, box: "+", v: ["full"], icon: folder },
  { text: "Model History", level: 0, box: "-", v: ["top"], icon: folder },
  { text: "Datum Coordinate Sy...", level: 1, v: ["", "full"], mark: "box", upToDate: true, dim: true, icon: <Ico><path d="M2 1v9l10 4M2 10l12-6M3 4l9 3-8 3 8 3" stroke="#444" /><path d="M0 2l2-2 2 2" stroke="#2030d0" /><path d="M12 3h3v2" stroke="#18a030" strokeWidth="1.500" /><path d="M10 15l3-1" stroke="#d02020" strokeWidth="1.500" /></Ico> },
  { text: "Sketch (1) \"SKETCH_0...", level: 1, v: ["", "full"], mark: "box", upToDate: true, dim: true, icon: sketchIcon },
  { text: "Revolve (2)", level: 1, v: ["", "full"], mark: "box", upToDate: true, icon: <Ico><path d="M8 2C3 1 1 4 2 8l3 2v4l3 1z" fill="#3060d0" stroke="#183888" /><path d="M8 2c5-1 7 2 6 6l-3 2v4l-3 1z" fill="#f88828" stroke="#b04810" /><path d="M8 4v10" stroke="#ffe080" strokeWidth="2" /></Ico> },
  { text: "Datum Plane (3)", level: 1, v: ["", "full"], mark: "box", upToDate: true, dim: true, icon: <Ico><path d="M2.500 1.500l10 3v10.500l-10-3z" fill="#f4f8f4" stroke="#667068" /></Ico> },
  { text: "Sketch (4) \"SKETCH_0...", level: 1, v: ["", "full"], mark: "box", upToDate: true, dim: true, icon: sketchIcon },
  { text: "Extrude (5)", level: 1, v: ["", "full"], mark: "box", upToDate: true, icon: <Ico><path d="M1 4l3-2h10v9l-3 3H1z" fill="#f89830" stroke="#b85810" /><path d="M3 5v8M8 4v10M12 4v7" stroke="#ffe0a0" /><path d="M5.500 4v10M10 4v10" stroke="#c05810" /></Ico> },
];

function Guides({ row }: { row: Row }) {
  const w = 20 + 19 * row.level;
  const x0 = 9.5 + 19 * row.level;
  return (
    <svg width={w} height="19" viewBox={`0 0 ${w} 19`} className="block shrink-0" fill="none" aria-hidden="true">
      <g stroke="#909090" strokeDasharray="1 1">
        {row.v.map((kind, i) =>
          kind ? <path key={i} d={`M${9.5 + 19 * i} ${kind === "bottom" ? 10 : 0}V${kind === "top" ? 10 : 20}`} /> : null,
        )}
        <path d={`M${x0} 9.500H${w - 2}`} />
      </g>
      {row.box && (
        <g>
          <rect x={x0 - 4} y="5.500" width="8" height="8" fill="#fff" stroke="#c4c4c4" />
          <path d={`M${x0 - 2.5} 9.500h5${row.box === "+" ? "m-2.500-2.500v5" : ""}`} stroke="#111" />
        </g>
      )}
    </svg>
  );
}

function Mark({ row }: { row: Row }) {
  if (row.mark === "check") return <span className="flex w-[15px] shrink-0 justify-center"><Check /></span>;
  if (row.mark === "question")
    return (
      <span className="w-[15px] shrink-0 pl-0.5">
        <svg width="11" height="15" viewBox="0 0 11 15" fill="none" aria-hidden="true"><path d="M2 5c0-5 7-4 7-1S5.500 7 5.500 10" stroke="#6a6410" strokeWidth="3.400" /><path d="M2 5c0-5 7-4 7-1S5.500 7 5.500 10" stroke="#e8e020" strokeWidth="1.800" /><circle cx="5.500" cy="13" r="1.500" fill="#e8e020" stroke="#6a6410" strokeWidth=".6" /></svg>
      </span>
    );
  if (row.mark === "box")
    return (
      <span className="relative mr-0.5 ml-px size-3 shrink-0">
        <input type="checkbox" defaultChecked aria-label={`Show ${row.text}`} className="block size-3 appearance-none border border-black bg-white" />
        <span className="pointer-events-none absolute inset-0"><Check /></span>
      </span>
    );
  return null;
}

function Navigator() {
  return (
    <aside className="flex w-[307px] shrink-0 flex-col overflow-hidden border-r border-[#707c84] pr-2.5 pl-1.5">
      <div className="flex h-7 shrink-0 items-center justify-between pr-1.5 pl-1">
        <h2 className="pt-0.5 text-xs">Part Navigator</h2>
        <button type="button" aria-label="Maximize" className="mt-0.5 h-[11px] w-3 border border-t-2 border-black" />
      </div>
      <div className="flex min-h-0 flex-1 border-x border-t-2 border-[#d4d4d4] pl-px">
        <div className="min-w-0 flex-1">
          <table className="w-full table-fixed border-collapse text-xs">
            <thead>
              <tr className="h-[19px] bg-[#f0f0f0]">
                <th className="w-[200px] border-r border-b border-[#d4d4d4] p-0 pl-1.5 text-left font-normal">
                  <span className="flex items-center gap-4 leading-[18px]">
                    Name
                    <svg width="10" height="5" viewBox="0 0 10 5" aria-hidden="true"><path d="M0 5h10L5 0z" fill="#111" /></svg>
                  </span>
                </th>
                <th className="border-b border-[#d4d4d4] p-0 pl-1.5 text-left leading-[18px] font-normal whitespace-nowrap">Up to Date</th>
              </tr>
            </thead>
            <tbody>
              {rows.map((row, i) => (
                <tr key={i} className="h-5 odd:bg-white even:bg-[#f9f9f9]">
                  <td className="border-r border-b border-[#e4e4e4] p-0">
                    <div className="flex h-[19px] items-center whitespace-nowrap">
                      <Guides row={row} />
                      <Mark row={row} />
                      {row.icon}
                      <span className={row.dim ? "ml-[3px] text-[#a0a0a0]" : "ml-[3px] text-[#222]"}>{row.text}</span>
                    </div>
                  </td>
                  <td className="border-b border-[#e4e4e4] p-0 pl-1.5">{row.upToDate && <Check />}</td>
                </tr>
              ))}
            </tbody>
          </table>
        </div>
        <div className="flex w-[17px] shrink-0 flex-col bg-[#f0f0f0]">
          <div className="h-[19px] border-b border-[#d4d4d4]" />
          <button type="button" aria-label="Scroll up" className="flex h-[17px] items-center justify-center">
            <Ico w={9} h={6}><path d="M1 5l3.500-3.500L8 5" stroke="#555" strokeWidth="1.700" /></Ico>
          </button>
          <div className="ml-px w-[15px] flex-1 bg-[#cdcdcd]" />
        </div>
      </div>
    </aside>
  );
}

function Canvas() {
  return (
    <main className="min-w-0 flex-1 overflow-hidden bg-white">
      <svg className="block size-full" fill="none" stroke="#000" aria-label="Imported drawing view">
        <g transform="translate(-339 -167)">
          <path d="M592 177.500H1600" strokeDasharray="8 8" strokeDashoffset="5" />
          <path d="M592.500 177V1200" strokeDasharray="8 8" strokeDashoffset="5" stroke="#555" />
          <g stroke="#8a8a8a">
            <path d="M883.500 331v24M883.500 360v16M883.500 382v24M883.500 426v24M883.500 455v16M883.500 475v25M847 367.500h18M872 367.500h22M896 367.500h24M847 463.500h18M872 463.500h22M896 463.500h24M801.500 379v23M801.500 405v20M801.500 429v23M856.500 357v116" />
          </g>
          <path d="M765 415.500h26M796 415.500h14" />
          <g strokeWidth="1.500">
            <path d="M856 372.500h134.500v85.500H856M898 409.500h92M898 421.500h92" />
            <path d="M867 373l9-10a9 9 0 0 1 16.500 8l-5.500 15zM867 458l9 10a9 9 0 0 0 16.500-8l-5.500-15zM816 403l-17 3a9.500 9.500 0 0 0 0 19l17 3z" fill="#fff" />
            <circle cx="856.500" cy="415.500" r="42" fill="#fff" />
            <circle cx="856.500" cy="415.500" r="33" />
            <circle cx="856.500" cy="415.500" r="24" />
            <circle cx="883.500" cy="367.500" r="4.500" /><circle cx="883.500" cy="463.500" r="4.500" /><circle cx="801.500" cy="415.500" r="4.500" />
            <path d="M852.500 383v65h8v-65zM824 411.500v8h65v-8z" fill="#fff" />
            <circle cx="856.500" cy="415.500" r="9" fill="#fff" />
            <circle cx="856.500" cy="415.500" r="5" strokeWidth="2" />
          </g>
          <path d="M883.500 363v9M879 367.500h9M883.500 376v10M883.500 445v10M883.500 459v9M879 463.500h9M801.500 411v9M797 415.500h9M856.500 375v34M856.500 422v34M856.500 411v9" stroke="#888" />
          <path d="M814 415.500h34M852 415.500h9M865 415.500h49" />
        </g>
      </svg>
    </main>
  );
}

function Markup() {
  return (
    <svg className="pointer-events-none absolute top-0 left-0" width="420" height="390" viewBox="0 0 420 390" fill="none" stroke="#ff1010" strokeWidth="2" strokeLinejoin="round" strokeLinecap="round" aria-hidden="true">
      <path d="M309.500 98L307 125L305 145L300 172L299 211M301 208L325 203L341 200L360 198L373 193M310 102L319 104L323 107L333 121L342 136L349 152L353 163L360 173L368 187L376 197" />
      <path d="M310 97L311 105L316 115L322 135L327 153L329 163L339 187L342 202L348 217L353 237L358 252L361 263L365 272L375 297L382 312L384 320L392 333L399 353L406 368L408 377" />
    </svg>
  );
}

export default function App() {
  return (
    <div className="relative flex h-screen flex-col overflow-hidden bg-white font-['Open_Sans',sans-serif] text-[#1c1c1c]">
      <QuickBar />
      <TabBar />
      <Ribbon />
      <SelectionBar />
      <div className="flex min-h-0 flex-1 overflow-hidden">
        <Rail />
        <Navigator />
        <Canvas />
      </div>
      <Markup />
    </div>
  );
}
